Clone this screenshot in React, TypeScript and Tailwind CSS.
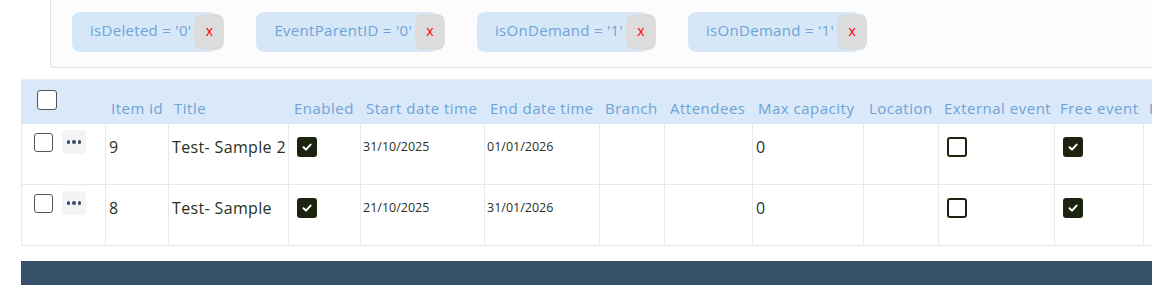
import React from "react";

const FONT = { fontFamily: "'Open Sans', 'Noto Sans', sans-serif" };

const chips = ["isDeleted = '0'", "EventParentID = '0'", "isOnDemand = '1'", "isOnDemand = '1'"];

const cols = [
  { label: "" },
  { label: "Item id" },
  { label: "Title" },
  { label: "Enabled" },
  { label: "Start date time" },
  { label: "End date time" },
  { label: "Branch" },
  { label: "Attendees" },
  { label: "Max capacity" },
  { label: "Location" },
  { label: "External event" },
  { label: "Free event" },
  { label: "Featured" },
];

const widthClass = [
  "w-[84px]", "w-[63px]", "w-[120px]", "w-[72px]", "w-[124px]", "w-[115px]", "w-[65px]",
  "w-[88px]", "w-[111px]", "w-[75px]", "w-[116px]", "w-[89px]", "w-[120px]",
];

function Box({ checked }: { checked: boolean }) {
  return checked ? (
    <div className="w-[20px] h-[20px] rounded-[3px] bg-[#1c2410] flex items-center justify-center">
      <svg width="12" height="12" viewBox="0 0 12 12">
        <path d="M2.5 6.2 L5 8.6 L9.6 3.6" fill="none" stroke="#fff" strokeWidth="2" strokeLinecap="round" strokeLinejoin="round" />
      </svg>
    </div>
  ) : (
    <div className="w-[20px] h-[20px] rounded-[3px] border-2 border-[#1c2410] bg-white" />
  );
}

const rows = [
  { id: "9", title: "Test- Sample 2", start: "31/10/2025", end: "01/01/2026" },
  { id: "8", title: "Test- Sample", start: "21/10/2025", end: "31/01/2026" },
];

export default function App() {
  return (
    <div className="w-[1152px] h-[285px] overflow-hidden bg-white text-[#2a3124]" style={FONT}>
      {/* filter panel */}
      <div className="ml-[50px] w-[1200px] bg-[#fcfcfc] border-l border-b border-[#e2e2e2] rounded-bl-[4px] pt-[12px] pb-[15px] pl-[21px] flex gap-[32px]">
        {chips.map((c, i) => (
          <div key={i} className="flex items-center h-[40px]">
            <span className="h-[40px] flex items-center bg-[#d6e8f8] rounded-[8px] pl-[18px] pr-[27px] pb-[3px] text-[15px] tracking-[0.3px] text-[#6fa3d6] whitespace-nowrap">
              {c}
            </span>
            <button className="-ml-[24px] w-[30px] h-[36px] bg-[#dcdcdc] rounded-[8px] text-[#ff0000] text-[14px] pb-[3px] flex items-center justify-center">
              x
            </button>
          </div>
        ))}
      </div>

      {/* table */}
      <div className="mt-[11px] ml-[21px] w-[1300px]">
        <div className="flex h-[45px] bg-[#d9e9f9] border-t border-[#eeeeee]">
          {cols.map((c, i) => (
            <div key={i} className={`${widthClass[i]} shrink-0 ${i === 0 ? "pl-[16px] pt-[10px]" : "pl-[6px] flex items-end pb-[6px]"}`}>
              {i === 0 ? (
                <div className="w-[20px] h-[20px] rounded-[3px] border border-[#555] bg-white" />
              ) : (
                <span className="text-[15px] leading-[20px] tracking-[0.5px] text-[#6fa3d6] whitespace-nowrap">{c.label}</span>
              )}
            </div>
          ))}
        </div>
        {rows.map((r, ri) => (
          <div key={ri} className="flex h-[61px] border-l border-b border-[#e6e8eb]">
            <div className={`${widthClass[0]} shrink-0 border-r border-[#e6e8eb] pl-[12px] pt-[6px] flex items-start gap-[9px]`}>
              <div className="h-[24px] flex items-center">
                <div className="w-[19px] h-[19px] rounded-[3px] border border-[#555] bg-white" />
              </div>
              <div className="w-[24px] h-[24px] rounded-[3px] bg-[#f3f4f6] flex items-center justify-center gap-[2px]">
                <span className="w-[3.5px] h-[3.5px] rounded-full bg-[#3b4a66]" />
                <span className="w-[3.5px] h-[3.5px] rounded-full bg-[#3b4a66]" />
                <span className="w-[3.5px] h-[3.5px] rounded-full bg-[#3b4a66]" />
              </div>
            </div>
            <div className={`${widthClass[1]} shrink-0 border-r border-[#e6e8eb] pl-[3px] pt-[13px] text-[16px] leading-[20px]`}>{r.id}</div>
            <div className={`${widthClass[2]} shrink-0 border-r border-[#e6e8eb] pl-[3px] pt-[13px] text-[16px] leading-[20px] tracking-[0.35px] whitespace-nowrap`}>{r.title}</div>
            <div className={`${widthClass[3]} shrink-0 border-r border-[#e6e8eb] pl-[8px] pt-[13px]`}><Box checked /></div>
            <div className={`${widthClass[4]} shrink-0 border-r border-[#e6e8eb] pl-[2px] pt-[13px] text-[12.5px] leading-[20px]`}>{r.start}</div>
            <div className={`${widthClass[5]} shrink-0 border-r border-[#e6e8eb] pl-[2px] pt-[13px] text-[12.5px] leading-[20px]`}>{r.end}</div>
            <div className={`${widthClass[6]} shrink-0 border-r border-[#e6e8eb]`} />
            <div className={`${widthClass[7]} shrink-0 border-r border-[#e6e8eb]`} />
            <div className={`${widthClass[8]} shrink-0 border-r border-[#e6e8eb] pl-[3px] pt-[13px] text-[16px] leading-[20px]`}>0</div>
            <div className={`${widthClass[9]} shrink-0 border-r border-[#e6e8eb]`} />
            <div className={`${widthClass[10]} shrink-0 border-r border-[#e6e8eb] pl-[8px] pt-[13px]`}><Box checked={false} /></div>
            <div className={`${widthClass[11]} shrink-0 border-r border-[#e6e8eb] pl-[8px] pt-[13px]`}><Box checked /></div>
            <div className={`${widthClass[12]} shrink-0 border-r border-[#e6e8eb]`} />
          </div>
        ))}
        <div className="mt-[15px] h-[30px] bg-[#37516a]" />
      </div>
    </div>
  );
}
